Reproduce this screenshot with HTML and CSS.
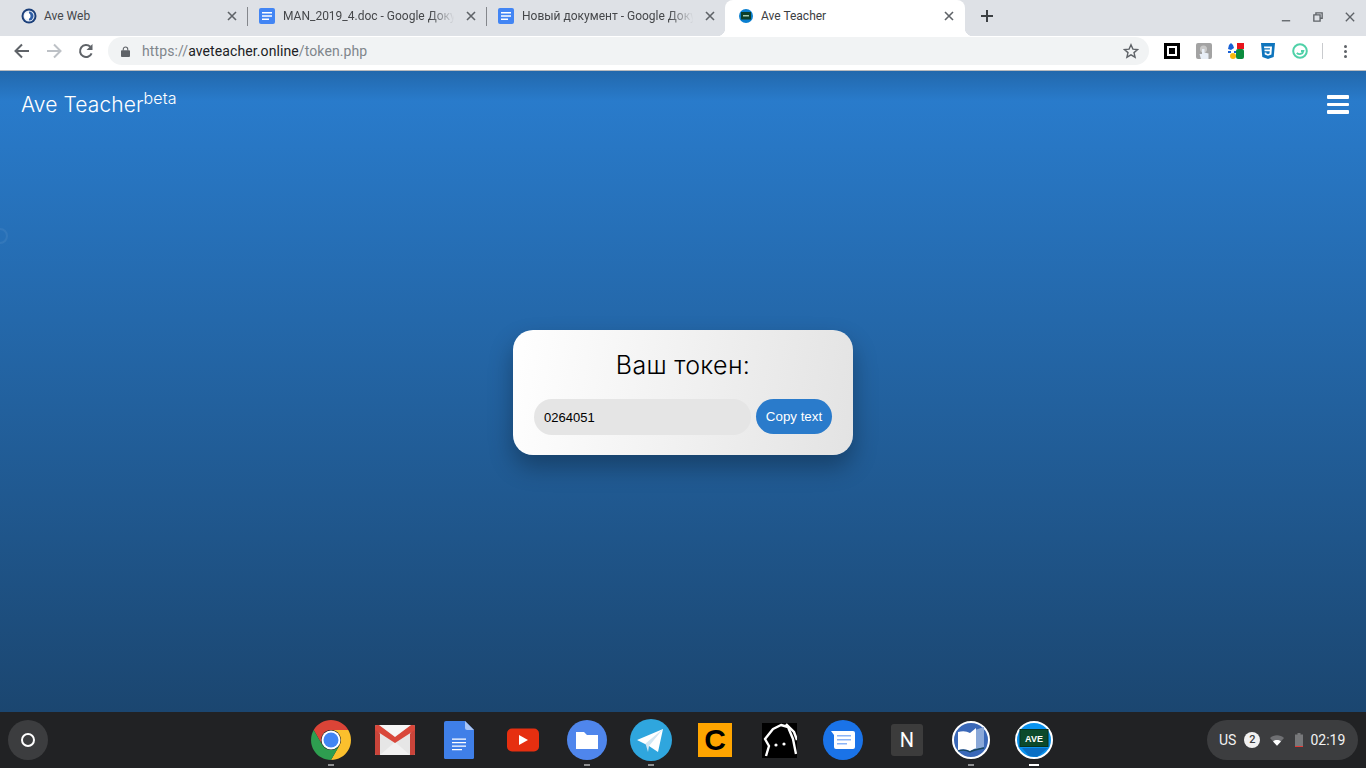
FILE: index.html
```html
<!DOCTYPE html>
<html lang="en">
<head>
    <meta charset="UTF-8">
    <meta name="viewport" content="width=device-width, initial-scale=1.0">
    <title>Ave Teacher</title>
    <link rel="stylesheet" href="styles.css">
</head>
<body>
    <div class="tabstrip">
        <div class="tab">
            <svg class="favicon" viewBox="0 0 16 16"><circle cx="8" cy="8" r="7.500" fill="#1b3f7a"/><circle cx="8" cy="8" r="5.500" fill="#e9eef5"/><path d="M8 3.500a4.500 4.500 0 0 1 0 9z" fill="#2f5fa8"/><circle cx="6.500" cy="8" r="3" fill="#fff"/></svg>
            <span class="tab-title">Ave Web</span>
            <svg class="tab-close" viewBox="0 0 10 10"><path d="M1 1l8 8M9 1l-8 8"/></svg>
        </div>
        <div class="tab tab-sep">
            <svg class="favicon" viewBox="0 0 16 16"><rect width="16" height="16" rx="2" fill="#4285f4"/><path d="M3 4h10v1.500H3zM3 7.300h10v1.500H3zM3 10.600h7v1.500H3z" fill="#fff"/></svg>
            <span class="tab-title fade">MAN_2019_4.doc - Google Доку</span>
            <svg class="tab-close" viewBox="0 0 10 10"><path d="M1 1l8 8M9 1l-8 8"/></svg>
        </div>
        <div class="tab tab-sep">
            <svg class="favicon" viewBox="0 0 16 16"><rect width="16" height="16" rx="2" fill="#4285f4"/><path d="M3 4h10v1.500H3zM3 7.300h10v1.500H3zM3 10.600h7v1.500H3z" fill="#fff"/></svg>
            <span class="tab-title fade">Новый документ - Google Доку</span>
            <svg class="tab-close" viewBox="0 0 10 10"><path d="M1 1l8 8M9 1l-8 8"/></svg>
        </div>
        <div class="tab tab-active">
            <svg class="favicon" viewBox="0 0 16 16"><circle cx="8" cy="8" r="7" fill="#0a7fd0"/><rect x="3" y="4" width="10" height="7.500" fill="#0c3f2a"/><rect x="5" y="7" width="6" height="1.500" fill="#9fc7b0"/></svg>
            <span class="tab-title">Ave Teacher</span>
            <svg class="tab-close" viewBox="0 0 10 10"><path d="M1 1l8 8M9 1l-8 8"/></svg>
        </div>
        <svg class="new-tab" viewBox="0 0 12 12"><path d="M6 0v12M0 6h12"/></svg>
        <div class="window-controls">
            <svg class="win-icon" viewBox="0 0 12 12"><path d="M1 10.500h10"/></svg>
            <svg class="win-icon" viewBox="0 0 12 12"><path d="M3.500 3V1h7.500v6.500H9M1 3.500h7.500V11H1z"/></svg>
            <svg class="win-icon" viewBox="0 0 12 12"><path d="M1 1l10 10M11 1L1 11"/></svg>
        </div>
    </div>

    <div class="toolbar">
        <svg class="nav-icon" viewBox="0 0 16 16"><path d="M15 8H2M8 1.500L1.500 8 8 14.500" fill="none" stroke="#5f6368" stroke-width="2"/></svg>
        <svg class="nav-icon" viewBox="0 0 16 16"><path d="M1 8h13M8 1.500L14.500 8 8 14.500" fill="none" stroke="#bdc1c6" stroke-width="2"/></svg>
        <svg class="nav-icon" viewBox="0 0 16 16"><path d="M13.600 10.300A6 6 0 1 1 12.300 3.800" fill="none" stroke="#5f6368" stroke-width="2"/><path d="M14.500 1v6h-6z" fill="#5f6368"/></svg>
        <div class="omnibox">
            <svg class="lock" viewBox="0 0 10 12"><path d="M2.500 5V3.500a2.500 2.500 0 0 1 5 0V5" fill="none" stroke="#5f6368" stroke-width="1.200"/><rect y="4.500" width="10" height="7.500" rx="1" fill="#5f6368"/></svg>
            <span class="url"><span class="url-dim">https://</span>aveteacher.online<span class="url-dim">/token.php</span></span>
            <svg class="star" viewBox="0 0 16 16"><path d="M8 1.800l1.900 4.300 4.700.4-3.600 3.100 1.100 4.600L8 11.800l-4.100 2.400L5 9.600 1.400 6.500l4.700-.4z" fill="none" stroke="#5f6368" stroke-width="1.400"/></svg>
        </div>
        <div class="extensions">
            <svg class="ext" viewBox="0 0 16 16"><rect width="16" height="16" fill="#000"/><rect x="3" y="3" width="10" height="10" fill="#fff"/><rect x="5" y="5" width="6" height="6" fill="#000"/></svg>
            <svg class="ext" viewBox="0 0 16 16"><rect width="16" height="16" rx="2" fill="#a3a3a3"/><circle cx="7.500" cy="6" r="3.500" fill="#c9c9c9"/><path d="M6 6h2.500v3.500l4 1V16H5l-1.500-5H6z" fill="#e8eef6"/></svg>
            <svg class="ext" viewBox="0 0 16 16"><rect x="9" width="7" height="6" fill="#e8141c"/><rect x="8" y="6" width="8" height="10" rx="2" fill="#0b8c3e"/><circle cx="5" cy="13" r="3" fill="#f9b90f"/><path d="M3 0l2 2 1 3-3 2-3-1 1-4z" fill="#1761d6"/><rect x="0" y="8" width="3" height="2" fill="#1761d6"/><rect x="6" y="8" width="2" height="2" fill="#1761d6"/></svg>
            <svg class="ext" viewBox="0 0 16 16"><path d="M1 0h14l-1.300 14L8 16l-5.700-2z" fill="#0f75bd"/><path d="M4 3.500h8l-.6 8L8 12.800l-3.200-1.200-.2-2h1.800l.1 1L8 11l1.500-.5.2-2.300H4.500V6.500h5.400l.1-1.300H4.200z" fill="#fff"/></svg>
            <svg class="ext" viewBox="0 0 16 16"><circle cx="8" cy="8" r="6.800" fill="none" stroke="#4fd1a8" stroke-width="2"/><path d="M4.800 9.800a3.800 3.800 0 0 0 6.600-1.800H9" fill="none" stroke="#4fd1a8" stroke-width="1.800"/></svg>
        </div>
        <div class="toolbar-sep"></div>
        <div class="menu-dots"><i></i><i></i><i></i></div>
    </div>

    <div class="page">
        <svg class="edge-mark" viewBox="0 0 8 16"><path d="M0 1a7 7 0 0 1 0 14" fill="none" stroke="#fff" stroke-width="2"/></svg>
        <div class="navbar">
            <div class="brand">Ave Teacher<sup class="brand-beta">beta</sup></div>
            <div class="burger"><i></i><i></i><i></i></div>
        </div>
        <div class="page-body">
            <div class="token-card">
                <h2 class="token-title">Ваш токен:</h2>
                <div class="token-row">
                    <input class="token-input" type="text" value="0264051">
                    <button class="copy-btn">Copy text</button>
                </div>
            </div>
        </div>
    </div>

    <div class="shelf">
        <div class="launcher-wrap"><div class="launcher"><i></i></div></div>
        <div class="shelf-apps">
            <div class="app running">
                <svg class="app-icon" viewBox="0 0 40 40"><path d="M20 10H37.300A20 20 0 0 0 2.700 10L11.340 25A10 10 0 0 1 20 10z" fill="#db4437"/><path d="M20 10A10 10 0 0 1 28.660 25L20 40A20 20 0 0 0 37.300 10z" fill="#fbc02d"/><path d="M2.700 10A20 20 0 0 0 20 40L28.660 25A10 10 0 0 1 11.340 25z" fill="#2e9e50"/><circle cx="20" cy="20" r="9.500" fill="#fff"/><circle cx="20" cy="20" r="7.500" fill="#4285f4"/></svg>
            </div>
            <div class="app">
                <svg class="app-icon" viewBox="0 0 40 40"><rect y="5" width="40" height="30" rx="1.500" fill="#e6e6e6"/><path d="M5 35L20 22 35 35z" fill="#f1f1f1"/><path d="M0 6.500V33.500A1.500 1.500 0 0 0 1.500 35H5V14zM40 6.500V33.500A1.500 1.500 0 0 1 38.500 35H35V14z" fill="#c9443a"/><path d="M0 6.500A1.500 1.500 0 0 1 1.500 5H4L20 17 36 5h2.500A1.500 1.500 0 0 1 40 6.500V10L20 23 0 10z" fill="#d9483b"/><path d="M4.500 5h31L20 16.500z" fill="#f6f6f6"/></svg>
            </div>
            <div class="app">
                <svg class="app-icon" viewBox="0 0 40 40"><path d="M7 1H26L35 10V37.500A1.500 1.500 0 0 1 33.500 39H6.500A1.500 1.500 0 0 1 5 37.500V3A2 2 0 0 1 7 1z" fill="#3f7fe8"/><path d="M26 1L35 10H28A2 2 0 0 1 26 8z" fill="#a9c5f5"/><path d="M13 18.500h14v1.300H13zM13 22h14v1.300H13zM13 25.500h14v1.300H13zM13 29h10v1.300H13z" fill="#fff"/></svg>
            </div>
            <div class="app">
                <svg class="app-icon" viewBox="0 0 40 40"><rect x="4" y="8.500" width="32" height="23" rx="5" fill="#e62f10"/><path d="M16 15l9 5-9 5z" fill="#fff"/></svg>
            </div>
            <div class="app running">
                <svg class="app-icon" viewBox="0 0 40 40"><circle cx="20" cy="20" r="20" fill="#4f86ec"/><path d="M9 12h8l3 3h11v14H9z" fill="#fff"/></svg>
            </div>
            <div class="app running">
                <svg class="app-icon telegram" viewBox="0 0 42 42"><circle cx="21" cy="21" r="21" fill="#2fa6de"/><path d="M7 21L33 10 28 33 19 27z" fill="#fff"/><path d="M15.500 24.500L33 10 19 27l-1 6z" fill="#d2e6f2"/></svg>
            </div>
            <div class="app"><div class="tile-c">C</div></div>
            <div class="app">
                <svg class="app-icon ghost" viewBox="0 0 35 35"><rect width="35" height="35" fill="#000"/><path d="M4 33L7 23 3 16 11 6 19 2 26 4 31 16 34 31" fill="none" stroke="#fff" stroke-width="2.400" stroke-linejoin="round"/><path d="M24 1L32 9 35 17" fill="none" stroke="#fff" stroke-width="2.400"/><circle cx="14" cy="22" r="1.600" fill="#fff"/><circle cx="22" cy="21" r="1.600" fill="#fff"/></svg>
            </div>
            <div class="app">
                <svg class="app-icon" viewBox="0 0 40 40"><circle cx="20" cy="20" r="20" fill="#1a73e8"/><path d="M8 11H30A2 2 0 0 1 32 13V27A2 2 0 0 1 30 29H13A2 2 0 0 1 11 27V15z" fill="#fff"/><path d="M14 15h14v1.500H14zM14 19h14v1.500H14zM14 23h10v1.500H14z" fill="#8ab4f8"/></svg>
            </div>
            <div class="app"><div class="tile-n">N</div></div>
            <div class="app running">
                <svg class="app-icon book" viewBox="0 0 38 38"><circle cx="19" cy="19" r="18" fill="#3a68b8" stroke="#fff" stroke-width="2"/><path d="M23 9L32 6V26L23 29z" fill="#8aa8d8"/><path d="M6 11Q13 9 18 12V30Q13 27 6 29z" fill="#fff"/><path d="M18 12L24 7V27L18 30z" fill="#fff"/><path d="M6 30Q13 28 18 31 21 29 32 27" fill="none" stroke="#17465e" stroke-width="1.300"/></svg>
            </div>
            <div class="app current">
                <svg class="app-icon ave" viewBox="0 0 38 38"><circle cx="19" cy="19" r="18" fill="#0a93ee" stroke="#fff" stroke-width="2"/><path d="M7 27H33L22 36 14 35z" fill="#0a6fc4"/><rect x="5" y="8.500" width="28" height="17" fill="#0c4a2c" stroke="#08331e"/><text class="ave-text" x="19" y="20.500" text-anchor="middle">AVE</text></svg>
            </div>
        </div>
        <div class="tray-wrap">
            <div class="tray">
                <span class="tray-lang">US</span>
                <span class="tray-badge">2</span>
                <svg class="tray-wifi" viewBox="0 0 16 12"><path d="M0 3C4-1 12-1 16 3L8 12z" fill="#6f7073"/><path d="M3.500 7C6 5 10 5 12.500 7L8 12z" fill="#fff"/></svg>
                <svg class="tray-battery" viewBox="0 0 8 14"><path d="M2.500 0h3v1.500H8V14H0V1.500h2.500z" fill="#77787a"/><rect y="13" width="8" height="1" fill="#e53935"/></svg>
                <span class="tray-time">02:19</span>
            </div>
        </div>
    </div>
</body>
</html>
```

FILE: styles.css
```css
* {
    box-sizing: border-box;
}
html, body {
    height: 100%;
}
body {
    margin: 0;
    height: 768px;
    overflow: hidden;
    display: flex;
    flex-direction: column;
    font-family: Roboto, sans-serif;
}

/* browser tabs */
.tabstrip {
    height: 36px;
    flex: none;
    display: flex;
    align-items: stretch;
    padding-left: 8px;
    background-color: #dee1e6;
}
.tab {
    position: relative;
    width: 239px;
    flex: none;
    display: flex;
    align-items: center;
    padding: 0 10px 4px 13px;
    font-size: 12px;
    color: #45474a;
}
.tab-sep {
    padding-left: 12px;
}
.tab-sep .favicon {
    margin-right: 8px;
}
.tab-sep::before {
    content: "";
    position: absolute;
    left: 0;
    top: 7px;
    width: 1px;
    height: 19px;
    background-color: #84878c;
}
.tab-active {
    width: 240px;
    padding-left: 13px;
    padding-right: 11px;
    background-color: #fff;
    border-radius: 8px 8px 0 0;
    color: #3c4043;
}
.tab-active::before,
.tab-active::after {
    content: "";
    position: absolute;
    bottom: 0;
    width: 8px;
    height: 8px;
}
.tab-active::before {
    left: -8px;
    background: radial-gradient(circle at 0 0, transparent 8px, #fff 8.500px);
}
.tab-active::after {
    right: -8px;
    background: radial-gradient(circle at 100% 0, transparent 8px, #fff 8.500px);
}
.favicon {
    width: 16px;
    height: 16px;
    flex: none;
    margin-right: 7px;
}
.tab-title {
    flex: 1;
    overflow: hidden;
    white-space: nowrap;
}
.fade {
    -webkit-mask-image: linear-gradient(to right, #000 84%, transparent 98%);
    mask-image: linear-gradient(to right, #000 84%, transparent 98%);
}
.tab-close {
    width: 10px;
    height: 10px;
    flex: none;
    margin-left: 8px;
    fill: none;
    stroke: #5f6368;
    stroke-width: 1.6;
}
.new-tab {
    width: 12px;
    height: 12px;
    margin: 10px 0 0 16px;
    fill: none;
    stroke: #3c4043;
    stroke-width: 2;
}
.window-controls {
    margin-left: auto;
    display: flex;
    gap: 22px;
    padding: 12px 11px 0 0;
}
.win-icon {
    width: 10px;
    height: 10px;
    fill: none;
    stroke: #5f6368;
    stroke-width: 1.6;
}

/* address bar */
.toolbar {
    height: 35px;
    flex: none;
    display: flex;
    align-items: center;
    padding: 0 0 4px 14px;
    background-color: #fff;
    border-bottom: 1px solid #b9bbbe;
}
.nav-icon {
    width: 16px;
    height: 16px;
    margin-right: 16px;
    flex: none;
}
.omnibox {
    width: 1041px;
    height: 28px;
    margin-left: -2px;
    flex: none;
    display: flex;
    align-items: center;
    padding: 0 10px 0 13px;
    border-radius: 14px;
    background-color: #f1f3f4;
}
.lock {
    width: 9px;
    height: 11px;
    margin-right: 12px;
}
.url {
    flex: 1;
    font-size: 14px;
    letter-spacing: 0.1px;
    color: #202124;
}
.url-dim {
    color: #80868b;
}
.star {
    width: 16px;
    height: 16px;
}
.extensions {
    display: flex;
    gap: 16px;
    margin-left: 15px;
}
.ext {
    width: 16px;
    height: 16px;
    display: block;
}
.toolbar-sep {
    width: 1px;
    height: 16px;
    margin-left: 14px;
    background-color: #c9cbce;
}
.menu-dots {
    display: flex;
    flex-direction: column;
    gap: 2px;
    margin-left: 21px;
}
.menu-dots i {
    width: 3px;
    height: 3px;
    border-radius: 50%;
    background-color: #5f6368;
}

/* the page itself */
.page {
    position: relative;
    flex: 1;
    display: flex;
    flex-direction: column;
    background: linear-gradient(to bottom, #2268ac 0, #297bcb 30px, #1b4670 100%);
}
.edge-mark {
    position: absolute;
    left: 0;
    top: 157px;
    width: 8px;
    height: 16px;
    opacity: 0.06;
}
.navbar {
    height: 64px;
    flex: none;
    display: flex;
    justify-content: space-between;
    padding: 23px 17px 0 21px;
    color: #fff;
}
.brand {
    font-family: Inter, sans-serif;
    font-weight: 300;
    font-size: 21px;
    letter-spacing: 0.1px;
    line-height: 22px;
}
.brand-beta {
    font-size: 16px;
    line-height: 0;
}
.burger {
    display: flex;
    flex-direction: column;
    gap: 4px;
    padding-top: 1px;
}
.burger i {
    width: 22px;
    height: 3.500px;
    border-radius: 1px;
    background-color: #fff;
}
.page-body {
    flex: 1;
    display: flex;
    align-items: center;
    justify-content: center;
    margin-bottom: 62px;
}
.token-card {
    width: 340px;
    height: 125px;
    padding: 19px 21px 0;
    border-radius: 20px;
    background: linear-gradient(100deg, #fff 0, #e3e3e3 100%);
    box-shadow: 0 12px 24px rgba(0, 0, 0, 0.3);
    text-align: center;
}
.token-title {
    margin: 0 0 18px;
    font-family: Inter, sans-serif;
    font-weight: 300;
    font-size: 25px;
    letter-spacing: 0.3px;
    line-height: 32px;
    color: #000;
}
.token-row {
    display: flex;
    gap: 5px;
    align-items: flex-start;
}
.token-input {
    width: 217px;
    height: 36px;
    padding: 0 10px;
    border: none;
    border-radius: 18px;
    background-color: #e5e5e5;
    font-family: "Liberation Sans", sans-serif;
    font-size: 13px;
    color: #000;
}
.copy-btn {
    width: 76px;
    height: 35px;
    padding: 0;
    border: none;
    border-radius: 18px;
    background-color: #2a7bcb;
    font-family: "Liberation Sans", sans-serif;
    font-size: 13.333px;
    color: #fff;
}

/* chromeos shelf */
.shelf {
    height: 56px;
    flex: none;
    display: grid;
    grid-template-columns: 1fr auto 1fr;
    align-items: center;
    background-color: #212224;
}
.launcher-wrap {
    padding-left: 8px;
}
.launcher {
    width: 40px;
    height: 40px;
    display: flex;
    align-items: center;
    justify-content: center;
    border-radius: 50%;
    background-color: #3c3d3f;
}
.launcher i {
    width: 14px;
    height: 14px;
    border: 2px solid #fff;
    border-radius: 50%;
}
.shelf-apps {
    display: flex;
}
.app {
    position: relative;
    width: 64px;
    height: 56px;
    display: flex;
    align-items: center;
    justify-content: center;
}
.app-icon {
    width: 40px;
    height: 40px;
}
.app.running::after,
.app.current::after {
    content: "";
    position: absolute;
    left: 50%;
    bottom: 2px;
    width: 6px;
    height: 2px;
    margin-left: -3px;
    background-color: #8f9092;
}
.app.current::after {
    width: 10px;
    margin-left: -6px;
    background-color: #fff;
}
.telegram {
    width: 42px;
    height: 42px;
}
.tile-c {
    width: 34px;
    height: 34px;
    background-color: #ffa500;
    color: #000;
    font-family: "Liberation Sans", sans-serif;
    font-weight: 700;
    font-size: 30px;
    line-height: 34px;
    text-align: center;
}
.ghost {
    width: 35px;
    height: 35px;
}
.tile-n {
    width: 32px;
    height: 32px;
    border-radius: 3px;
    background-color: #3c3c3c;
    color: #fff;
    font-size: 20px;
    line-height: 32px;
    text-align: center;
}
.book, .ave {
    width: 38px;
    height: 38px;
}
.ave {
    margin-right: 2px;
}
.ave-text {
    font-family: "Liberation Sans", sans-serif;
    font-weight: 700;
    font-size: 9px;
    fill: #fff;
}
.tray-wrap {
    display: flex;
    justify-content: flex-end;
    padding-right: 8px;
}
.tray {
    width: 151px;
    height: 40px;
    display: flex;
    align-items: center;
    padding-left: 12px;
    border-radius: 20px;
    background-color: #3c3d3f;
    color: #f1f1f1;
    font-size: 14px;
}
.tray-badge {
    width: 16px;
    height: 16px;
    margin-left: 8px;
    border-radius: 50%;
    background-color: #f1f1f1;
    color: #3c3d3f;
    font-size: 11px;
    font-weight: 500;
    line-height: 16px;
    text-align: center;
}
.tray-wifi {
    width: 14px;
    height: 11px;
    margin-left: 10px;
}
.tray-battery {
    width: 8px;
    height: 14px;
    margin-left: 11px;
}
.tray-time {
    margin-left: 7px;
}
```
